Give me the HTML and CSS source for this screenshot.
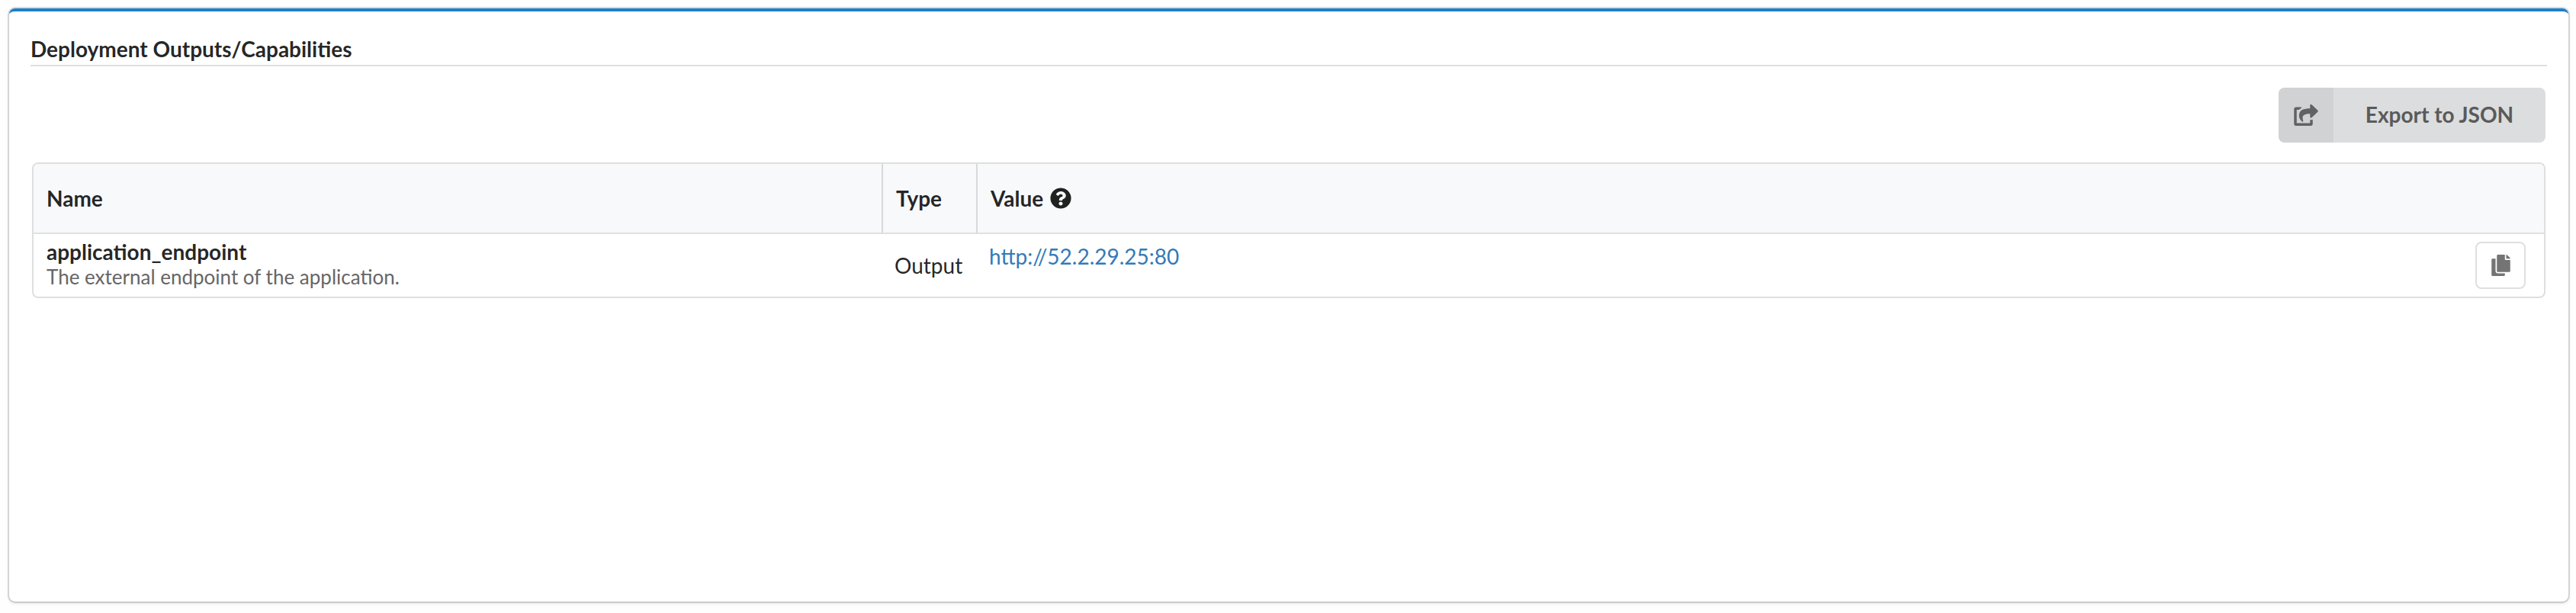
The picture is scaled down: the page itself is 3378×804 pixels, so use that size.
FILE: index.html
```html
<!DOCTYPE html>
<html lang="en">
<head>
<meta charset="utf-8">
<title>Deployment Outputs/Capabilities</title>
<link rel="stylesheet" href="styles.css">
</head>
<body>
<section class="segment">
  <h5 class="title">Deployment Outputs/Capabilities</h5>
  <div class="actions">
    <button class="export" type="button">
      <span class="export-icon"><svg viewBox="0 0 576 512" width="32" height="28"><path d="M568.482 177.448L424.479 313.433C409.3 327.768 384 317.14 384 295.985v-71.963c-144.575.97-205.566 35.113-164.775 171.353 4.483 14.973-12.846 26.567-25.006 17.33C155.252 383.105 120 326.488 120 269.339c0-143.937 117.599-172.5 264-173.312V24.012c0-21.174 25.317-31.768 40.479-17.448l144.003 135.988c10.02 9.463 10.028 25.425 0 34.896zM384 379.128V448H64V128h50.916a11.99 11.99 0 0 0 8.648-3.693c14.953-15.568 32.237-27.89 51.014-37.676C185.708 80.83 181.584 64 169.033 64H48C21.49 64 0 85.49 0 112v352c0 26.51 21.49 48 48 48h352c26.51 0 48-21.49 48-48v-88.806c0-8.288-8.197-14.066-16.011-11.302a71.83 71.83 0 0 1-34.189 3.377c-7.27-1.046-13.8 4.514-13.8 11.859z"/></svg></span>
      <span class="export-label">Export to JSON</span>
    </button>
  </div>
  <table class="outputs">
    <thead>
      <tr>
        <th class="col-name">Name</th>
        <th class="col-type">Type</th>
        <th><span class="value-head">Value <svg class="help" viewBox="0 0 512 512" width="28" height="28"><path d="M504 256c0 136.997-111.043 248-248 248S8 392.997 8 256C8 119.083 119.043 8 256 8s248 111.083 248 248zM262.655 90c-54.497 0-89.255 22.957-116.549 63.758-3.536 5.286-2.353 12.415 2.715 16.258l34.699 26.31c5.205 3.947 12.621 3.008 16.665-2.122 17.864-22.658 30.113-35.797 57.303-35.797 20.429 0 45.698 13.148 45.698 32.958 0 14.976-12.363 22.667-32.534 33.976C247.128 238.528 216 254.941 216 296v4c0 6.627 5.373 12 12 12h56c6.627 0 12-5.373 12-12v-1.333c0-28.462 83.186-29.647 83.186-106.667 0-58.002-60.165-102-116.531-102zM256 338c-25.365 0-46 20.635-46 46 0 25.364 20.635 46 46 46s46-20.636 46-46c0-25.365-20.635-46-46-46z"/></svg></span></th>
      </tr>
    </thead>
    <tbody>
      <tr>
        <td class="name"><div class="output-name">application_endpoint</div><div class="output-description">The external endpoint of the application.</div></td>
        <td class="type">Output</td>
        <td class="value"><div class="value-row"><a class="link">http://52.2.29.25:80</a><button class="copy" type="button"><svg viewBox="0 0 448 512" width="25" height="28"><path d="M320 448v40c0 13.255-10.745 24-24 24H24c-13.255 0-24-10.745-24-24V120c0-13.255 10.745-24 24-24h72v296c0 30.879 25.121 56 56 56h168zm0-344V0H152c-13.255 0-24 10.745-24 24v368c0 13.255 10.745 24 24 24h272c13.255 0 24-10.745 24-24V128H344c-13.2 0-24-10.8-24-24zm120.971-31.029L375.029 7.029A24 24 0 0 0 358.059 0H352v96h96v-6.059a24 24 0 0 0-7.029-16.97z"/></svg></button></div></td>
      </tr>
    </tbody>
  </table>
</section>
</body>
</html>
```
FILE: styles.css
```css
* { box-sizing: border-box; }

body {
  margin: 0;
  height: 804px;
  padding: 11px 10px 15px 12px;
  overflow: hidden;
  background: #fefefe;
  color: rgba(0, 0, 0, .87);
  font: 28px/40px Lato, sans-serif;
}

svg { display: block; fill: currentColor; }

.segment {
  width: 3356px;
  height: 778px;
  padding: 29px 28px 0;
  background: #fff;
  border-top: 4px solid #1f7fc9;
  border-radius: 8px;
  box-shadow: 0 0 0 2px rgba(34, 36, 38, .15), 0 2px 4px 0 rgba(34, 36, 38, .15);
}

.title {
  height: 43px;
  margin: 0;
  border-bottom: 2px solid #dedfdf;
  font-size: 28px;
  line-height: 40px;
}

.actions {
  display: flex;
  justify-content: flex-end;
  padding: 28px 2px 26px;
}

.export {
  display: flex;
  width: 350px;
  height: 72px;
  padding: 0;
  overflow: hidden;
  border: 0;
  border-radius: 8px;
  background: #dcddde;
  color: #5a5a5a;
  font: bold 28px/28px Lato, sans-serif;
}

.export-icon {
  display: flex;
  align-items: center;
  justify-content: center;
  width: 72px;
  height: 72px;
  background: #d1d2d3;
  color: #616362;
}

.export-label { flex: 1; line-height: 70px; }

.outputs {
  width: 3296px;
  margin-left: 2px;
  border: 2px solid #dedfdf;
  border-radius: 8px;
  border-spacing: 0;
  table-layout: fixed;
  overflow: hidden;
}

.outputs th {
  height: 92px;
  padding: 0 16px 0 17px;
  background: #f8f9fb;
  border-bottom: 2px solid #dfe0e1;
  text-align: left;
}

.outputs th + th { border-left: 2px solid #d8d9db; }
.outputs .col-name { width: 1112px; }
.outputs .col-type { width: 124px; padding-right: 0; }
.value-head { display: flex; align-items: center; gap: 9px; }

.outputs td { height: 82px; padding: 0 16px 0 17px; }
.outputs td.type { padding-right: 0; }
.output-name { font-weight: bold; line-height: 31px; }
.output-description { color: #666; font-size: 26px; line-height: 35px; }

.value-row {
  display: flex;
  align-items: flex-start;
  justify-content: space-between;
  height: 62px;
  padding-right: 8px;
}

.link { color: #337ab7; line-height: 38px; }

.copy {
  display: flex;
  align-items: center;
  justify-content: center;
  width: 66px;
  height: 62px;
  padding: 0;
  border: 2px solid #dedfdf;
  border-radius: 8px;
  background: #fff;
  color: #747474;
}
```
